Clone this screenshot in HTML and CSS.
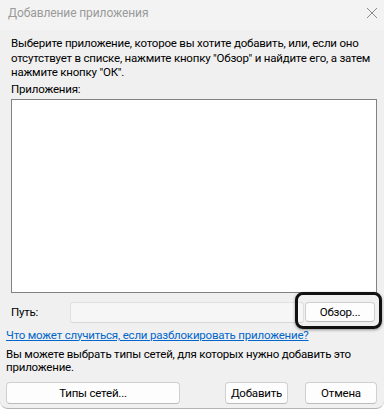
FILE: index.html
```html
<!DOCTYPE html>
<html lang="ru">
<head>
    <meta charset="UTF-8">
    <title>Добавление приложения</title>
    <link rel="stylesheet" href="styles.css">
</head>
<body>

<div class="window">
    <div class="titlebar">
        <span class="title">Добавление приложения</span>
        <svg class="close" width="12" height="12" viewBox="0 0 12 12">
            <path d="M1 1 L11 11 M11 1 L1 11" stroke="#8a8a8a" stroke-width="1" fill="none"/>
        </svg>
    </div>

    <div class="content">
        <p class="intro">Выберите приложение, которое вы хотите добавить, или, если оно<br>отсутствует в списке, нажмите кнопку "Обзор" и найдите его, а затем<br>нажмите кнопку "ОК".</p>

        <div class="label">Приложения:</div>
        <div class="app-list"></div>

        <div class="path-row">
            <span class="path-label">Путь:</span>
            <div class="path-input"></div>
            <div class="browse-wrap">
                <button class="btn browse">Обзор...</button>
                <div class="focus-ring"></div>
            </div>
        </div>

        <a class="link" href="#">Что может случиться, если разблокировать приложение?</a>

        <p class="net-text">Вы можете выбрать типы сетей, для которых нужно добавить это<br>приложение.</p>

        <div class="buttons">
            <button class="btn wide">Типы сетей...</button>
            <span class="spacer"></span>
            <button class="btn add">Добавить</button>
            <button class="btn cancel">Отмена</button>
        </div>
    </div>
</div>

</body>
</html>
```

FILE: styles.css
```css
body { margin: 0; background: #ffffff; font-family: Roboto, "Liberation Sans", sans-serif; font-size: 11.5px; letter-spacing: -0.2px; color: #000; }
.window { width: 384px; height: 408px; background: #f0f0f0; border-bottom: 1px solid #b4b4b4; border-radius: 0 0 8px 8px; overflow: hidden; }
.titlebar { height: 30px; background: #f3f3f3; display: flex; align-items: center; justify-content: space-between; padding: 0 6px 4px 8px; box-sizing: border-box; }
.title { color: #9a9a9a; font-size: 12px; letter-spacing: -0.1px; }
.content { padding: 6px 7px 0 6px; }
.intro { margin: 0 0 1px 5px; line-height: 14.5px; white-space: nowrap; }
.label { margin-left: 5px; line-height: 16px; }
.app-list { margin: 2px 0 0 5px; height: 192px; border: 1px solid #828282; background: #fff; }
.path-row { display: flex; align-items: center; margin: 9px 0 0 5px; height: 21px; }
.path-label { width: 59px; }
.path-input { width: 232px; height: 19px; border: 1px solid #e0e0e0; border-bottom-color: #d6d6d6; background: #f6f6f6; border-radius: 3px; }
.browse-wrap { position: relative; margin-left: 1px; }
.btn { font-family: inherit; font-size: 11.5px; letter-spacing: -0.2px; color: #000; background: #fdfdfd; border: 1px solid #d0d0d0; border-bottom-color: #bcbcbc; border-radius: 4px; height: 22px; padding: 0; }
.browse { width: 70px; height: 20px; }
.focus-ring { position: absolute; left: -10px; top: -10px; right: -7px; bottom: -7px; border: 3px solid #111; border-radius: 8px; box-shadow: 0 1px 3px rgba(0,0,0,0.4); }
.link { display: block; margin-top: 5px; color: #0066cc; line-height: 14px; }
.net-text { margin: 6px 0 0 0; line-height: 13.5px; white-space: nowrap; }
.buttons { display: flex; margin-top: 7px; }
.wide { width: 174px; }
.spacer { flex: 1; }
.add { width: 63px; margin-right: 17px; }
.cancel { width: 72px; }
```
